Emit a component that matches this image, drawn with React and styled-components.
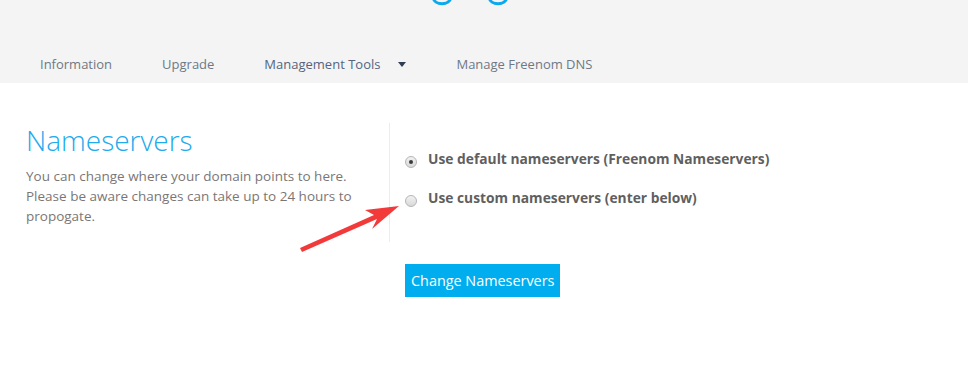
import React from "react";
import styled, { createGlobalStyle } from "styled-components";

const GlobalStyle = createGlobalStyle`
  html, body {
    margin: 0;
    padding: 0;
    background: #ffffff;
    font-family: "Open Sans", "Noto Sans", sans-serif;
  }
`;

const Page = styled.div`
  width: 968px;
  height: 389px;
  position: relative;
  overflow: hidden;
  background: #ffffff;
`;

const Header = styled.header`
  height: 83px;
  background: #f4f4f4;
  display: flex;
  flex-direction: column;
`;

const LogoStrip = styled.div`
  height: 40px;
  display: flex;
  padding-left: 431px;
`;

const Nav = styled.nav`
  display: flex;
  align-items: center;
  gap: 50px;
  padding: 5px 0 0 40px;
  height: 38px;
`;

const NavItem = styled.a`
  display: flex;
  align-items: center;
  gap: 18px;
  font-size: 13px;
  color: ${(props) => (props.$active ? "#55657e" : "#6f7885")};
  text-decoration: none;
  cursor: pointer;
`;

const Caret = styled.span`
  width: 0;
  height: 0;
  border-left: 4px solid transparent;
  border-right: 4px solid transparent;
  border-top: 5px solid #2f3d55;
  margin-top: 1px;
`;

const Content = styled.main`
  padding-top: 40px;
`;

const Row = styled.div`
  display: flex;
`;

const Intro = styled.section`
  width: 390px;
  box-sizing: border-box;
  padding: 0 22px 16px 26px;
  border-right: 1px solid #ececec;
`;

const Title = styled.h2`
  margin: 0;
  font-size: 28px;
  font-weight: 300;
  line-height: 34px;
  color: #22aaee;
`;

const Text = styled.p`
  margin: 9px 0 0;
  font-size: 13.5px;
  line-height: 20px;
  color: #7b7676;
`;

const Options = styled.div`
  display: flex;
  flex-direction: column;
  gap: 19px;
  padding: 26px 0 0 15px;
`;

const Option = styled.label`
  display: flex;
  align-items: center;
  gap: 11px;
  font-size: 13.8px;
  font-weight: 700;
  line-height: 20px;
  color: #5f5f5f;
  cursor: pointer;
`;

const Radio = styled.span`
  width: 12px;
  height: 12px;
  box-sizing: border-box;
  border-radius: 50%;
  border: 1px solid #b5b5b5;
  background: linear-gradient(#f2f2f2, #d8d8d8);
  display: flex;
  align-items: center;
  justify-content: center;
  margin-top: 5px;
  &::after {
    content: "";
    width: 4px;
    height: 4px;
    border-radius: 50%;
    background: ${(props) => (props.$checked ? "#3a3a3a" : "transparent")};
  }
`;

const Actions = styled.div`
  padding: 22px 0 0 405px;
`;

const Button = styled.button`
  height: 33px;
  padding: 0 6px;
  border: none;
  background: #00aeef;
  color: #ffffff;
  font-family: "Open Sans", "Noto Sans", sans-serif;
  font-size: 14.4px;
  cursor: pointer;
`;

const Arrow = styled.svg`
  position: absolute;
  left: 298px;
  top: 196px;
`;

function Logo() {
  return (
    <svg width="80" height="8" viewBox="0 0 80 8">
      <path d="M2 -3 C3 6 19 6 20 -3" fill="none" stroke="#0aa8ec" strokeWidth="3" />
      <path d="M58 -3 C59 6 75 6 76 -3" fill="none" stroke="#0aa8ec" strokeWidth="3" />
    </svg>
  );
}

export default function App() {
  return (
    <Page>
      <GlobalStyle />
      <Header>
        <LogoStrip>
          <Logo />
        </LogoStrip>
        <Nav>
          <NavItem>Information</NavItem>
          <NavItem>Upgrade</NavItem>
          <NavItem $active>
            Management Tools <Caret />
          </NavItem>
          <NavItem>Manage Freenom DNS</NavItem>
        </Nav>
      </Header>
      <Content>
        <Row>
          <Intro>
            <Title>Nameservers</Title>
            <Text>
              You can change where your domain points to here. Please be aware
              changes can take up to 24 hours to propogate.
            </Text>
          </Intro>
          <Options>
            <Option>
              <Radio $checked />
              Use default nameservers (Freenom Nameservers)
            </Option>
            <Option>
              <Radio />
              Use custom nameservers (enter below)
            </Option>
          </Options>
        </Row>
        <Actions>
          <Button>Change Nameservers</Button>
        </Actions>
      </Content>
      <Arrow width="104" height="62" viewBox="0 0 104 62">
        <polygon points="4,56 79,23 74,33 101,10 67,14 76,19 2,52" fill="#f23a3a" />
      </Arrow>
    </Page>
  );
}
